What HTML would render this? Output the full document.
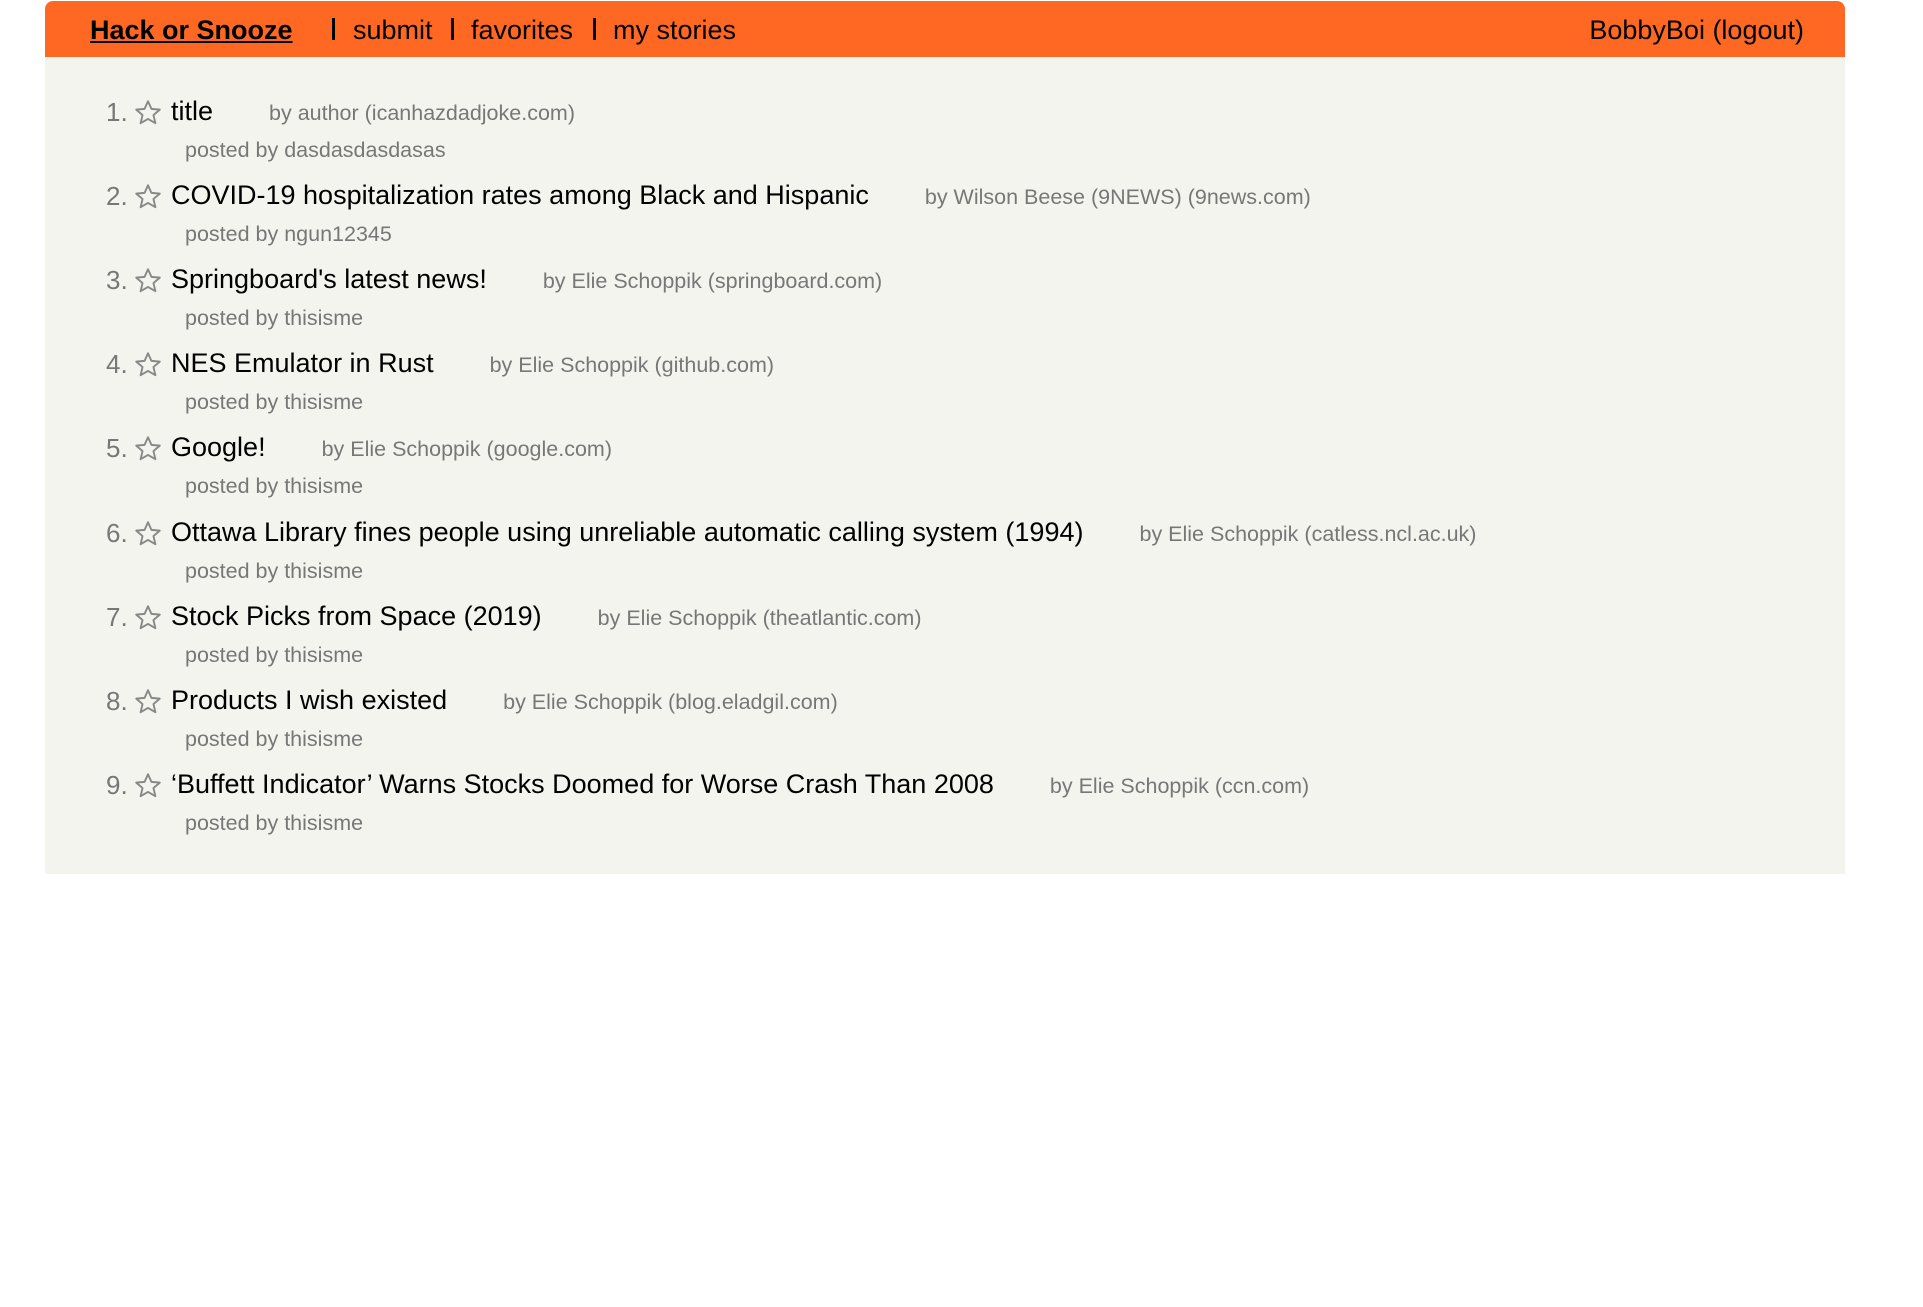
<!DOCTYPE html>
<html><head><meta charset="utf-8"><style>
body{margin:0;background:#fff;font-family:"Liberation Sans",Arial,sans-serif;width:1923px;height:1307px;position:relative;overflow:hidden}
#bar{position:absolute;left:45px;top:1px;width:1800px;height:56px;background:#fe6823;border-radius:8px 8px 0 0}
#main{position:absolute;left:45px;top:57px;width:1800px;height:817px;background:#f4f4ef}
.t{position:absolute;white-space:nowrap;line-height:1}
.nav{font-size:27px;color:#000;top:17px}
.pipe{position:absolute;top:18px;width:3px;height:22px;background:#000}
.num{font-size:26px;color:#777}
.ttl{font-size:27px;color:#000}
.by{font-size:21.5px;color:#777;margin-left:56px}
.sub{font-size:21.5px;color:#777}
svg{position:absolute}
</style></head><body>
<div id="bar"></div><div id="main"></div>
<div class="t nav" style="left:90px;font-weight:bold;text-decoration:underline">Hack or Snooze</div>
<div class="pipe" style="left:332px"></div>
<div class="t nav" style="left:353px">submit</div>
<div class="pipe" style="left:451px"></div>
<div class="t nav" style="left:471px">favorites</div>
<div class="pipe" style="left:593px"></div>
<div class="t nav" style="left:613px">my stories</div>
<div class="t nav" style="right:119px">BobbyBoi (logout)</div>

<div id="rows"></div>
<script>
var d=[["title","author","icanhazdadjoke.com","dasdasdasdasas"],
["COVID-19 hospitalization rates among Black and Hispanic","Wilson Beese (9NEWS)","9news.com","ngun12345"],
["Springboard's latest news!","Elie Schoppik","springboard.com","thisisme"],
["NES Emulator in Rust","Elie Schoppik","github.com","thisisme"],
["Google!","Elie Schoppik","google.com","thisisme"],
["Ottawa Library fines people using unreliable automatic calling system (1994)","Elie Schoppik","catless.ncl.ac.uk","thisisme"],
["Stock Picks from Space (2019)","Elie Schoppik","theatlantic.com","thisisme"],
["Products I wish existed","Elie Schoppik","blog.eladgil.com","thisisme"],
["\u2018Buffett Indicator\u2019 Warns Stocks Doomed for Worse Crash Than 2008","Elie Schoppik","ccn.com","thisisme"]];
var h="";
d.forEach(function(r,i){var y=98+i*84.1;
h+='<div class="t num" style="left:106px;top:'+(y+1)+'px">'+(i+1)+'.</div>';
h+='<svg width="30" height="27" viewBox="0 0 28 24" style="left:133px;top:'+(y+1)+'px"><path d="M14 1.5 L17.2 8.6 L25 9.3 L19.1 14.4 L20.9 22 L14 18 L7.1 22 L8.9 14.4 L3 9.3 L10.8 8.6 Z" fill="none" stroke="#888" stroke-width="1.8" stroke-linejoin="round"/></svg>';
h+='<div class="t" style="left:171px;top:'+y+'px"><span class="ttl">'+r[0]+'</span><span class="by">by '+r[1]+' ('+r[2]+')</span></div>';
h+='<div class="t sub" style="left:185px;top:'+(y+42)+'px">posted by '+r[3]+'</div>';});
document.getElementById("rows").innerHTML=h;
</script>
</body></html>
